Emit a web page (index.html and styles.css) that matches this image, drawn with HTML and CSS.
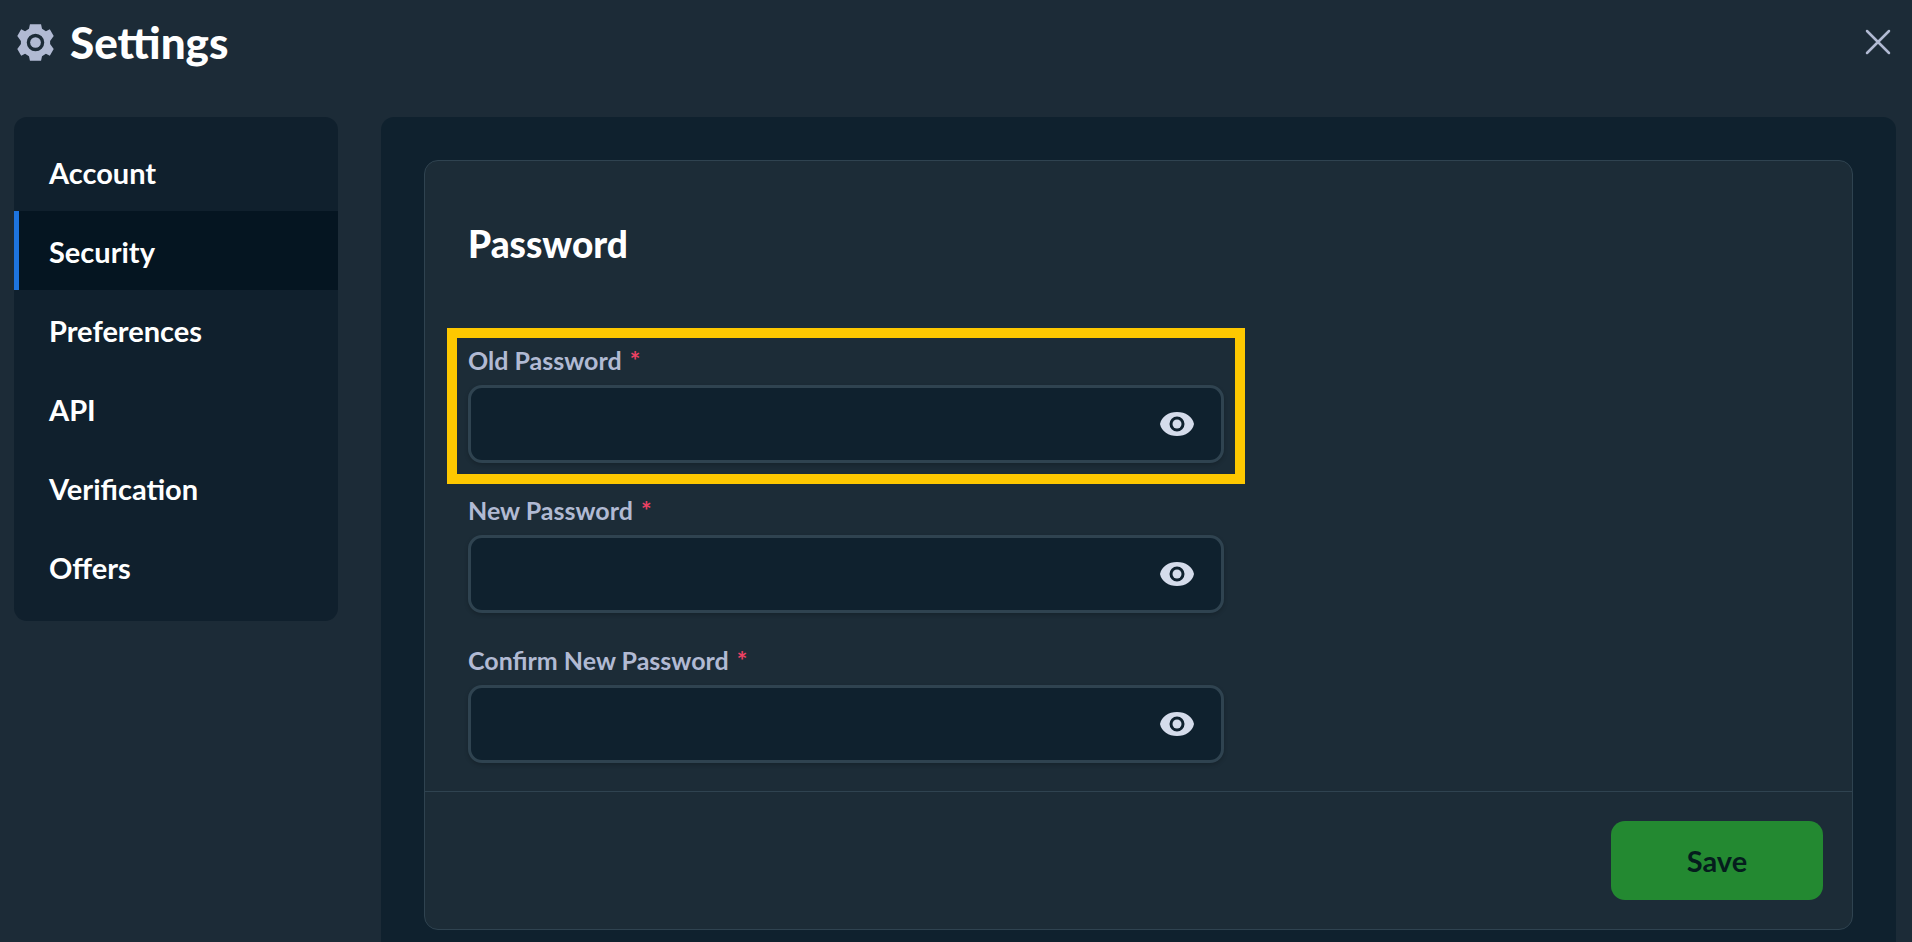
FILE: index.html
```html
<!DOCTYPE html>
<html lang="en">
<head>
    <meta charset="UTF-8">
    <meta name="viewport" content="width=device-width, initial-scale=1.0">
    <title>Settings</title>
    <link rel="stylesheet" href="styles.css">
</head>
<body>
    <header class="header">
        <svg class="gear" viewBox="0 0 38 38" aria-hidden="true">
            <path fill-rule="evenodd" d="M13.300 0.300h11.400l1 4.700 4 2.400 4-1.900 4 6.800-3.700 5.200v3l3.700 5.200-4 6.800-4-1.900-4 2.400-1 4.700H13.300l-1-4.700-4-2.400-4 1.900-4-6.800L4 20.500v-3L0.300 12.300l4-6.800 4 1.900 4-2.400zM19 10a9 9 0 1 0 0 18 9 9 0 0 0 0-18z"/>
            <circle cx="19" cy="19" r="5.500"/>
        </svg>
        <h1>Settings</h1>
        <button type="button" class="close" aria-label="Close">
            <svg viewBox="0 0 26 26" aria-hidden="true"><path d="M2 2l22 22M24 2L2 24"/></svg>
        </button>
    </header>

    <div class="layout">
        <nav class="sidebar">
            <a href="#account">Account</a>
            <a href="#security" class="active">Security</a>
            <a href="#preferences">Preferences</a>
            <a href="#api">API</a>
            <a href="#verification">Verification</a>
            <a href="#offers">Offers</a>
        </nav>

        <main class="content">
            <form class="card">
                <div class="card-body">
                    <h2>Password</h2>
                    <div class="fields">
                        <div class="field highlight">
                            <label for="old-password">Old Password <span class="required">*</span></label>
                            <div class="input-wrap">
                                <input type="password" id="old-password">
                                <button type="button" class="eye" aria-label="Show old password">
                                    <svg viewBox="0 0 34 24" aria-hidden="true">
                                        <path fill-rule="evenodd" d="M17 0C8.500 0 1.500 4.500 0 12c1.500 7.500 8.500 12 17 12s15.500-4.500 17-12C32.500 4.500 25.500 0 17 0zm0 4.500a7.500 7.500 0 1 1 0 15 7.500 7.500 0 0 1 0-15z"/>
                                        <circle cx="17" cy="12" r="4.500"/>
                                    </svg>
                                </button>
                            </div>
                        </div>
                        <div class="field">
                            <label for="new-password">New Password <span class="required">*</span></label>
                            <div class="input-wrap">
                                <input type="password" id="new-password">
                                <button type="button" class="eye" aria-label="Show new password">
                                    <svg viewBox="0 0 34 24" aria-hidden="true">
                                        <path fill-rule="evenodd" d="M17 0C8.500 0 1.500 4.500 0 12c1.500 7.500 8.500 12 17 12s15.500-4.500 17-12C32.500 4.500 25.500 0 17 0zm0 4.500a7.500 7.500 0 1 1 0 15 7.500 7.500 0 0 1 0-15z"/>
                                        <circle cx="17" cy="12" r="4.500"/>
                                    </svg>
                                </button>
                            </div>
                        </div>
                        <div class="field">
                            <label for="confirm-password">Confirm New Password <span class="required">*</span></label>
                            <div class="input-wrap">
                                <input type="password" id="confirm-password">
                                <button type="button" class="eye" aria-label="Show confirmed password">
                                    <svg viewBox="0 0 34 24" aria-hidden="true">
                                        <path fill-rule="evenodd" d="M17 0C8.500 0 1.500 4.500 0 12c1.500 7.500 8.500 12 17 12s15.500-4.500 17-12C32.500 4.500 25.500 0 17 0zm0 4.500a7.500 7.500 0 1 1 0 15 7.500 7.500 0 0 1 0-15z"/>
                                        <circle cx="17" cy="12" r="4.500"/>
                                    </svg>
                                </button>
                            </div>
                        </div>
                    </div>
                </div>
                <div class="card-footer">
                    <button type="submit" class="save">Save</button>
                </div>
            </form>
        </main>
    </div>
</body>
</html>
```
FILE: styles.css
```css
* {
    box-sizing: border-box;
}
body {
    margin: 0;
    min-height: 100vh;
    background: #1c2b37;
    color: #fff;
    font-family: Lato, "Liberation Sans", sans-serif;
}
h1, h2 {
    margin: 0;
}
button {
    border: none;
    font-family: inherit;
    cursor: pointer;
}
.header {
    display: flex;
    align-items: center;
    padding: 18px 21px 0 17px;
}
.header h1 {
    margin-left: 16px;
    font-size: 44px;
    line-height: 48px;
    font-weight: 900;
}
.gear {
    width: 37px;
    height: 37px;
    fill: #b1bad3;
}
.close {
    display: flex;
    margin-left: auto;
    padding: 0;
    background: none;
}
.close svg {
    width: 26px;
    height: 26px;
    stroke: #b1bad3;
    stroke-width: 2.5;
    stroke-linecap: round;
}
.layout {
    display: flex;
    align-items: flex-start;
    gap: 43px;
    padding: 51px 16px 0 14px;
}
.sidebar {
    display: flex;
    flex-direction: column;
    flex: 0 0 324px;
    padding: 15px 0;
    border-radius: 13px;
    background: #10202d;
}
.sidebar a {
    padding: 21px 30px 19px;
    border-left: 5px solid transparent;
    color: #fff;
    font-size: 29px;
    line-height: 39px;
    font-weight: 700;
    text-decoration: none;
}
.sidebar a.active {
    border-left-color: #1d74df;
    background: #051521;
}
.content {
    flex: 1;
    padding: 43px 43px 12px;
    border-radius: 13px 13px 0 0;
    background: #0f212e;
}
.card {
    border: 1px solid #2f4350;
    border-radius: 14px;
    background: #1c2c37;
}
.card-body {
    padding: 60px 43px 28px;
}
.card-body h2 {
    font-size: 37px;
    line-height: 46px;
    font-weight: 900;
}
.fields {
    display: flex;
    flex-direction: column;
    gap: 36px;
    max-width: 756px;
    margin-top: 82px;
}
.highlight {
    outline: 10px solid #fdc800;
    outline-offset: 11px;
}
.field label {
    display: block;
    margin-bottom: 14px;
    color: #b1bad3;
    font-size: 25px;
    line-height: 22px;
    font-weight: 700;
}
.required {
    margin-left: 2px;
    color: #ed4163;
}
.input-wrap {
    display: flex;
    align-items: center;
    height: 78px;
    border: 3px solid #2f4350;
    border-radius: 14px;
    background: #0f212e;
    box-shadow: 0 2px 4px rgba(0, 0, 0, 0.2);
}
.input-wrap input {
    flex: 1;
    height: 100%;
    padding: 0 24px;
    border: none;
    outline: none;
    background: none;
    color: #fff;
    font-size: 25px;
}
.eye {
    display: flex;
    padding: 0 27px;
    background: none;
}
.eye svg {
    width: 34px;
    height: 24px;
    fill: #d5dceb;
}
.card-footer {
    display: flex;
    justify-content: flex-end;
    padding: 29px;
    border-top: 1px solid #2f4350;
}
.save {
    min-width: 212px;
    padding: 20px 29px;
    border-radius: 14px;
    background: #238931;
    color: #051d1d;
    font-size: 29px;
    line-height: 39px;
    font-weight: 700;
}
```
